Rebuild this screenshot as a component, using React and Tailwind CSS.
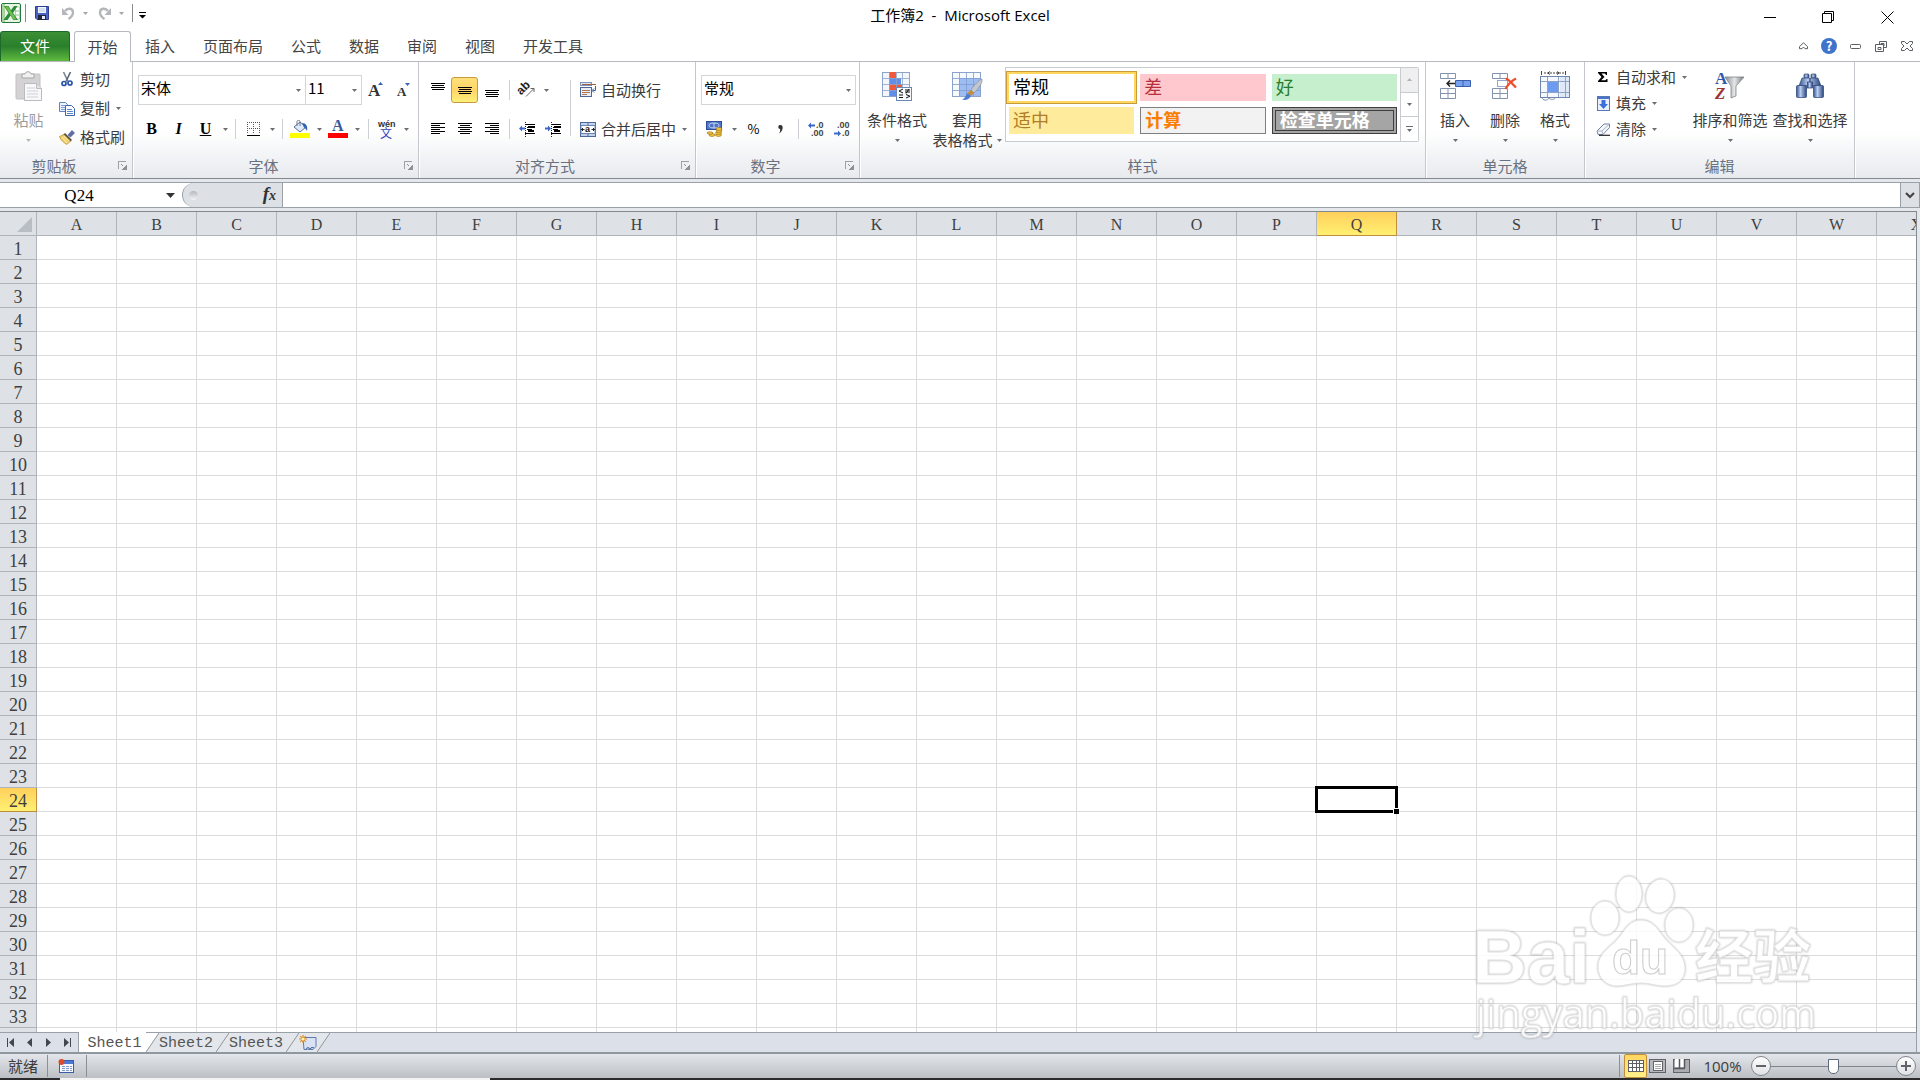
import { useState } from 'react';

const UI = "font-['Noto_Sans_CJK_SC',sans-serif]";
const COLUMNS = 'ABCDEFGHIJKLMNOPQRSTUVWX'.split('');
const ROWS = Array.from({ length: 34 }, (_, i) => i + 1);
const MENU_TABS = ['插入', '页面布局', '公式', '数据', '审阅', '视图', '开发工具'];

/* ---------- small shared parts ---------- */

function Arrow({ className = 'text-[#6b6f75]' }) {
  return (
    <svg width="5" height="3" viewBox="0 0 5 3" className={className} aria-hidden="true">
      <path d="M0 0h5L2.5 3z" fill="currentColor" />
    </svg>
  );
}

function DropArrow({ label }) {
  return (
    <button type="button" aria-label={label} className="flex h-6 w-3 items-center justify-center">
      <Arrow />
    </button>
  );
}

function Tool({ label, wide, active, children }) {
  return (
    <button
      type="button"
      aria-label={label}
      className={`flex h-[26px] items-center justify-center ${wide ? 'w-[27px]' : 'w-[26px]'} ${
        active ? 'rounded-[3px] border border-[#c69a3c] bg-linear-to-b from-[#ffe07a] via-[#ffd565] to-[#fff07c]' : ''
      }`}
    >
      {children}
    </button>
  );
}

function Sep({ tight }) {
  return <span className={`h-5 w-px bg-[#cdd1d6] ${tight ? 'mx-1' : 'mx-[5px]'}`} />;
}

function Launcher({ label }) {
  return (
    <button type="button" aria-label={label} className="absolute right-1 bottom-2">
      <svg width="10" height="9" viewBox="0 0 10 9" shapeRendering="crispEdges">
        <path d="M0 0h8v1H1v7H0z" fill="#9da1a6" />
        <path d="M9 4v5H4V8h1V7h1V6h1V5h1V4zM3 3h1v1h1v1H4V4H3z" fill="#8d9196" />
      </svg>
    </button>
  );
}

function Group({ title, width, launcher, children }) {
  return (
    <section
      aria-label={title}
      className={`relative flex shrink-0 flex-col border-r border-[#c3c7cc] shadow-[1px_0_0_#fff] ${width}`}
    >
      <div className="flex h-[92px]">{children}</div>
      <h2 className={`h-6 text-center text-[15px] leading-6 text-[#697180] ${launcher ? 'pr-6' : ''}`}>{title}</h2>
      {launcher && <Launcher label={`${title}设置`} />}
    </section>
  );
}

function BigButton({ label, second, width, muted, icon }) {
  return (
    <button
      type="button"
      className={`flex flex-col items-center pt-2 text-[15px] whitespace-nowrap ${width} ${muted ? 'text-[#9c9c9c]' : 'text-[#3b3b3b]'}`}
    >
      <span className="flex h-8 items-center">{icon}</span>
      <span className="mt-2 h-5 leading-5">{label}</span>
      <span className="flex h-5 items-center gap-1 leading-5">
        {second}
        <Arrow className={muted ? 'text-[#b8b8b8]' : 'text-[#6b6f75]'} />
      </span>
    </button>
  );
}

function SmallButton({ label, height, arrow, icon }) {
  return (
    <button type="button" className={`flex items-center text-[15px] whitespace-nowrap text-[#3b3b3b] ${height}`}>
      <span className="flex w-5 justify-center">{icon}</span>
      <span className="mr-[6px] ml-[3px]">{label}</span>
      {arrow && <Arrow />}
    </button>
  );
}

function Combo({ label, width, options }) {
  return (
    <span className={`relative flex h-[30px] items-center border border-[#d3d5d8] bg-white ${width}`}>
      <select
        aria-label={label}
        className="h-full w-full appearance-none bg-transparent pb-1 pl-[2px] text-[15px] text-black outline-none"
      >
        {options.map((o) => (
          <option key={o}>{o}</option>
        ))}
      </select>
      <span className="pointer-events-none absolute right-1">
        <Arrow />
      </span>
    </span>
  );
}

/* ---------- icons ---------- */

const ExcelLogo = () => (
  <svg width="20" height="20" viewBox="0 0 20 20">
    <rect x="0.5" y="0.5" width="19" height="19" rx="1.5" fill="#e8f3e3" stroke="#1f7a3c" />
    <path d="M1 1h3v18H1z" fill="#a8d59b" />
    <path d="M14.500 4h4v12h-4z" fill="#fff" stroke="#8cc084" strokeWidth="0.600" />
    <path d="M14 8h4M14 12h4" stroke="#8cc084" />
    <path d="M3 3h4.500l2.500 4.200L13 3h3.500L12 10l5 7h-4.700l-2.800-4.500L6.500 17H2.500L7.500 10z" fill="#2b8a3e" />
    <path d="M4 3.500h3l8.500 13h-3z" fill="#6fc04c" />
  </svg>
);

const SaveIcon = () => (
  <svg width="14" height="14" viewBox="0 0 14 14">
    <path d="M0.500 0.500h13v13H2L0.500 12z" fill="#4a62c4" stroke="#2e3d91" />
    <rect x="3" y="1" width="8" height="6" fill="#f1f5fc" />
    <path d="M4 3h6M4 5h6" stroke="#b7c7e8" />
    <rect x="3" y="9" width="8" height="5" fill="#20263d" />
    <rect x="7" y="10" width="3" height="3" fill="#e8ecf5" />
  </svg>
);

const UndoIcon = ({ flip }) => (
  <svg width="13" height="13" viewBox="0 0 13 13" className={flip ? '-scale-x-100' : ''}>
    <path d="M3 4C5.500 0.500 11 1 11 5.500c0 3-2 4.800-4.500 6.500" fill="none" stroke="#b4b6b9" strokeWidth="2.400" />
    <path d="M0 1v7h6.500z" fill="#b4b6b9" />
  </svg>
);

const PasteIcon = () => (
  <svg width="28" height="31" viewBox="0 0 28 31">
    <rect x="1" y="3" width="24" height="25" rx="1" fill="#d4d2d3" stroke="#c2c0c1" />
    <path d="M7 3h3c0-3 6-3 6 0h3v4H7z" fill="#f0f0f0" stroke="#a6a6a6" />
    <path d="M9.500 12.500h12l5 5v12h-17z" fill="#f8f8f9" stroke="#b9bbc0" />
    <path d="M21.500 12.500v5h5" fill="#e3e3e5" stroke="#b9bbc0" />
    <path d="M12 17h8M12 20h11M12 23h11M12 26h11" stroke="#cfd1d6" />
  </svg>
);

const CutIcon = () => (
  <svg width="12" height="15" viewBox="0 0 12 15" fill="none">
    <path d="M2.500 0L7 9.500" stroke="#7b8699" strokeWidth="1.600" />
    <path d="M9.500 0L5 9.500" stroke="#5b6680" strokeWidth="1.600" />
    <circle cx="3" cy="11.500" r="2" stroke="#2a55a8" strokeWidth="1.700" />
    <circle cx="9" cy="11" r="2" stroke="#2a55a8" strokeWidth="1.700" />
  </svg>
);

const CopyIcon = () => (
  <svg width="16" height="14" viewBox="0 0 16 14">
    <path d="M0.500 0.500h6l2 2v7h-8z" fill="#eef4fd" stroke="#5e83c2" />
    <path d="M2 3.500h4M2 5.500h4M2 7.500h4" stroke="#7d9fd9" />
    <path d="M6.500 3.500h6l3 3v7h-9z" fill="#fff" stroke="#3c64ad" />
    <path d="M8 7.500h5M8 9.500h6M8 11.500h6" stroke="#5e86cc" />
  </svg>
);

const BrushIcon = () => (
  <svg width="16" height="15" viewBox="0 0 16 15">
    <path d="M9 5l4-4.500 2.500 2.500L11.500 7z" fill="#5d6fa8" stroke="#404f82" strokeWidth="0.600" />
    <path d="M6 3l7 7-2 2-7-7z" fill="#4b4b4b" />
    <path d="M5 4.500l6.500 6.500L8 14.500C5 13 1.500 10 0.500 6.500z" fill="#f2cf68" stroke="#b58a2a" strokeWidth="0.700" />
    <path d="M3 7l5 6M5 6l5 5" stroke="#fbeeb9" />
  </svg>
);

const GrowIcon = ({ small }) => (
  <svg width="18" height="18" viewBox="0 0 18 18" className="overflow-visible">
    <text
      x={small ? 3 : 0}
      y="15"
      fill="#333"
      className={small ? "font-['Liberation_Serif',serif] text-[13px] font-bold" : "font-['Liberation_Serif',serif] text-[17px] font-bold"}
    >
      A
    </text>
    <path d={small ? 'M11 2h5l-2.500 3z' : 'M10 4h5l-2.500-3z'} fill="#3a62b0" />
  </svg>
);

const BorderIcon = () => (
  <svg width="13" height="14" viewBox="0 0 13 14" shapeRendering="crispEdges">
    <path d="M0 0.500h13M0 6.500h13M0.500 0v12M6.500 0v12M12.500 0v12" stroke="#555" strokeDasharray="1 1" />
    <path d="M0 13.500h13" stroke="#000" />
  </svg>
);

const FillIcon = () => (
  <svg width="20" height="18" viewBox="0 0 20 18">
    <path d="M4 7l6-5 6 5-6 5z" fill="#dfe9f8" stroke="#5a7099" />
    <path d="M7 6V1.500c0-1.500 3-1.500 3 0V6" fill="none" stroke="#6b7891" />
    <path d="M12 3c4 0 6 3 5 8-1-2-2-3-3-3.500z" fill="#2f62b5" />
    <rect y="13" width="20" height="5" fill="#ffff00" />
  </svg>
);

const FontColorIcon = () => (
  <svg width="20" height="18" viewBox="0 0 20 18" className="overflow-visible">
    <text x="4" y="11" fill="#3b5998" className="font-['Liberation_Serif',serif] text-[16px] font-bold">A</text>
    <rect y="13" width="20" height="5" fill="#ff0000" />
  </svg>
);

const PinyinIcon = () => (
  <svg width="18" height="18" viewBox="0 0 18 18" className="overflow-visible">
    <text x="0" y="7" fill="#333" className="font-['Liberation_Sans',sans-serif] text-[9px] font-bold">wén</text>
    <text x="2" y="18" fill="#3344c0" className="font-['Noto_Sans_CJK_SC',sans-serif] text-[12px]">文</text>
  </svg>
);

const Lines = ({ rows }) => (
  <svg width="14" height="14" viewBox="0 0 14 14" shapeRendering="crispEdges">
    {rows.map(([x, y, w]) => (
      <rect key={y} x={x} y={y} width={w} height="1" fill="#000" />
    ))}
  </svg>
);

const ALIGN = {
  top: [[0, 0, 14], [1, 2, 12], [0, 4, 14], [1, 6, 12]],
  middle: [[0, 4, 14], [1, 6, 12], [0, 8, 14], [1, 10, 12]],
  bottom: [[0, 7, 14], [1, 9, 12], [0, 11, 14], [1, 13, 12]],
  left: [[0, 1, 14], [0, 3, 9], [0, 5, 14], [0, 7, 9], [0, 9, 14], [0, 11, 9]],
  center: [[0, 1, 14], [2, 3, 10], [0, 5, 14], [2, 7, 10], [0, 9, 14], [2, 11, 10]],
  right: [[0, 1, 14], [5, 3, 9], [0, 5, 14], [5, 7, 9], [0, 9, 14], [5, 11, 9]],
};

const OrientIcon = () => (
  <svg width="16" height="16" viewBox="0 0 16 16" className="overflow-visible">
    <text x="1" y="13" transform="rotate(-45 2 12)" fill="#222" className="font-['Liberation_Sans',sans-serif] text-[12px] font-bold">ab</text>
    <path d="M7 14.500L15 6.500M15 6.500h-3.500M15 6.500V10" stroke="#666" fill="none" />
  </svg>
);

const IndentIcon = ({ increase }) => (
  <svg width="16" height="15" viewBox="0 0 16 15">
    <path d="M6 2.500h10M8 5h8M8 7.500h5M6 11h10" stroke="#000" shapeRendering="crispEdges" />
    <path d="M9 4.500h7M9 8.500h6" stroke="#000" strokeWidth="2" shapeRendering="crispEdges" />
    <path d="M6.500 0v15" stroke="#222" strokeDasharray="1 1" />
    <path d={increase ? 'M6 6.500L3 3.500v2H0v2h3v2z' : 'M0 6.500l3-3v2h3v2H3v2z'} fill="#3a68c8" />
  </svg>
);

const WrapIcon = () => (
  <svg width="17" height="16" viewBox="0 0 17 16">
    <rect x="0.500" y="0.500" width="11" height="3" fill="#dce6f5" stroke="#7d95bd" />
    <rect x="0.500" y="5.500" width="11" height="9" fill="#e9effa" stroke="#4d6896" />
    <path d="M2 2.500h14" stroke="#a0623a" />
    <path d="M2 8.500h8M2 10.500h8M2 12.500h5" stroke="#b07a54" />
    <path d="M15.500 4v4.500h-3M14 6.500l-2 2 2 2" fill="none" stroke="#3b5fa5" />
  </svg>
);

const MergeIcon = () => (
  <svg width="16" height="15" viewBox="0 0 16 15" className="overflow-visible">
    <rect x="0.500" y="0.500" width="15" height="14" fill="#c2d2ec" stroke="#4d6896" />
    <path d="M8 1v3M8 11v3" stroke="#4d6896" />
    <rect x="1" y="3.500" width="14" height="8" fill="#fff" stroke="#6a83ae" />
    <path d="M4.500 7.500H1M11.500 7.500H15M3 6L1.500 7.500 3 9M13 6l1.500 1.500L13 9" stroke="#222" fill="none" />
    <text x="5" y="10" fill="#111" className="font-['Liberation_Sans',sans-serif] text-[9px] font-bold">a</text>
  </svg>
);

const CurrencyIcon = () => (
  <svg width="17" height="16" viewBox="0 0 17 16">
    <rect x="0.500" y="0.500" width="15" height="8" fill="#4f74c8" stroke="#2d4c96" />
    <ellipse cx="8" cy="4.500" rx="5" ry="2.500" fill="none" stroke="#c8d7f4" />
    <path d="M8 2v5" stroke="#c8d7f4" />
    <g fill="#f5c944" stroke="#9d7316" strokeWidth="0.700">
      <ellipse cx="12.500" cy="14" rx="3" ry="1.400" />
      <ellipse cx="12.500" cy="12" rx="3" ry="1.400" />
      <ellipse cx="13" cy="10" rx="3" ry="1.400" />
      <ellipse cx="13" cy="8" rx="3" ry="1.400" />
      <ellipse cx="6" cy="14" rx="3" ry="1.400" />
      <ellipse cx="4" cy="12" rx="3" ry="1.200" />
    </g>
  </svg>
);

const DecimalIcon = ({ less }) => (
  <svg width="17" height="15" viewBox="0 0 17 15" className="overflow-visible font-['Liberation_Sans',sans-serif] text-[9px] font-bold">
    <text x={less ? 3 : 8} y="6" fill="#444">{less ? '.00' : '.0'}</text>
    <text x={less ? 8 : 3} y="14" fill="#444">{less ? '.0' : '.00'}</text>
    <path d={less ? 'M7 11.500l-3-3v2H0v2h4v2z' : 'M0 3.500l3-3v2h4v2H3v2z'} fill="#3a68c8" />
  </svg>
);

const ConditionalIcon = () => (
  <svg width="31" height="31" viewBox="0 0 31 31">
    <rect x="0.500" y="1.500" width="27" height="24" fill="#f3f7fd" stroke="#8da3c8" />
    <path d="M7 1h7v6H7zM7 13h13v6H7z" fill="#f0593d" />
    <path d="M7 7h12v6H7zM7 19h7v6H7z" fill="#5f8fea" />
    <path d="M7.500 1v25M14.500 1v25M20.500 1v25M0 7.500h28M0 13.500h28M0 19.500h28" stroke="#8da3c8" strokeWidth="0.800" />
    <rect x="14.500" y="16.500" width="15" height="13" fill="#f7f9fc" stroke="#6e86b3" />
    <path d="M21 18l-4 2 4 2M17 24h4M17 26.500h4M23 19h5M23 21h5M27 18l-3 4.500M24 23.500l4 1.700-4 1.800" stroke="#111" fill="none" />
  </svg>
);

const TableFormatIcon = () => (
  <svg width="31" height="31" viewBox="0 0 31 31">
    <rect x="0.500" y="1.500" width="28" height="24" fill="#f6f9fe" stroke="#8da3c8" />
    <path d="M7 7h21v18H7z" fill="#9dbdf2" />
    <path d="M7.500 1v25M14.500 1v25M21.500 1v25M0 7.500h29M0 13.500h29M0 19.500h29" stroke="#7f9ccf" strokeWidth="0.800" />
    <path d="M30 8c1 4-4 10-8 14l-3-3C22 14 27 9 30 8z" fill="#c3c7cf" stroke="#7c8390" strokeWidth="0.600" />
    <path d="M19 19l3 3-3 3-3.500-3z" fill="#c98a3a" />
    <path d="M15.500 22l3.500 3c-2 4-6 4.500-9 3.500 3-1 3.500-4 5.500-6.500z" fill="#4b7ed6" />
  </svg>
);

const InsertIcon = () => (
  <svg width="31" height="28" viewBox="0 0 31 28">
    <g fill="#fff" stroke="#8493ad">
      <path d="M0.500 1.500h15v5h-15zM8 1.500v5" />
      <path d="M0.500 16.500h15v10h-15zM8 16.500v10M0.500 21.500h15" />
    </g>
    <path d="M15.500 8.500h15v6h-15zM23 8.500v6" fill="#78a2f0" stroke="#3a5fae" />
    <path d="M7 11.500h8M10 8.500l-3 3 3 3" stroke="#222" strokeWidth="1.400" fill="none" />
  </svg>
);

const DeleteIcon = () => (
  <svg width="27" height="28" viewBox="0 0 27 28">
    <g fill="#fff" stroke="#8493ad">
      <path d="M0.500 1.500h15v5h-15zM8 1.500v5" />
      <path d="M0.500 16.500h15v10h-15zM8 16.500v10M0.500 21.500h15" />
    </g>
    <path d="M5.500 8.500h10v6h-10z" fill="none" stroke="#2a4f9e" strokeDasharray="1 1" />
    <path d="M14 6.500c4 2 7 6 10 9M24 6.500c-4 2-8 6-10.500 10.500" stroke="#ef4a2c" strokeWidth="2.200" fill="none" />
  </svg>
);

const FormatIcon = () => (
  <svg width="31" height="30" viewBox="0 0 31 30">
    <path d="M1.500 0v4M25.500 0v4" stroke="#444" />
    <path d="M4 2h20" stroke="#444" strokeDasharray="2 1" />
    <path d="M10 0.500L8 2l2 1.500M17 0.500L19 2l-2 1.500" stroke="#333" fill="none" />
    <path d="M2 26c0 4 6 4 7 1 1 2 6 2 7-1" fill="#fff" stroke="#7c8fae" />
    <rect x="0.500" y="5.500" width="29" height="21" fill="#f5f8fd" stroke="#6f86ae" />
    <path d="M20 6h9v20h-9z" fill="#dfe8f7" />
    <rect x="8" y="10" width="10" height="11" fill="#6d9bf0" />
    <path d="M7.500 6v20M18.500 6v20M25.500 6v20M1 10.500h28M1 21.500h28" stroke="#8ea3c7" />
  </svg>
);

const SumIcon = () => (
  <svg width="10" height="10" viewBox="0 0 10 10">
    <path d="M0 0h9v3H8L7 1.500H3.500L6.500 5l-3.300 3.300H7.500L8.500 7h1v3H0V9l3.500-4L0 1z" fill="#000" />
  </svg>
);

const FillDownIcon = () => (
  <svg width="13" height="15" viewBox="0 0 13 15">
    <rect x="0.500" y="0.500" width="12" height="14" fill="#eaf1fc" stroke="#5577b5" />
    <path d="M1 1h11v2H1z" fill="#4a74c9" />
    <path d="M4.500 4h4v4H11l-4.500 5L2 8h2.500z" fill="#3c6fd8" />
  </svg>
);

const EraserIcon = () => (
  <svg width="15" height="13" viewBox="0 0 15 13">
    <path d="M1 8l7-7h5.500v3.500L7 11.500H2z" fill="#f4f7fc" stroke="#76839c" />
    <path d="M1 8h5l7.500-7M6 8l1 3.500" fill="none" stroke="#a9b4c9" />
    <path d="M3 12.300h11" stroke="#222" strokeWidth="1.200" />
  </svg>
);

const SortIcon = () => (
  <svg width="30" height="30" viewBox="0 0 30 30" className="overflow-visible">
    <defs>
      <linearGradient id="funnel" x1="0" x2="1">
        <stop offset="0" stopColor="#8a8d92" />
        <stop offset="0.500" stopColor="#e4e5e7" />
        <stop offset="1" stopColor="#77797e" />
      </linearGradient>
    </defs>
    <path d="M10 6h19l-8 9v10l-5 2V15z" fill="url(#funnel)" stroke="#74777c" strokeWidth="0.700" />
    <text x="0" y="13" fill="#3558ab" className="font-['Liberation_Serif',serif] text-[17px] font-bold">A</text>
    <text x="0" y="28" fill="#9c3434" className="font-['Liberation_Serif',serif] text-[17px] font-bold italic">Z</text>
  </svg>
);

const FindIcon = () => (
  <svg width="28" height="26" viewBox="0 0 28 26">
    <defs>
      <linearGradient id="lens" x1="0" x2="1">
        <stop offset="0" stopColor="#33528f" />
        <stop offset="0.400" stopColor="#b9cdf0" />
        <stop offset="1" stopColor="#2b4680" />
      </linearGradient>
    </defs>
    <g fill="url(#lens)" stroke="#2a4274" strokeWidth="0.700">
      <rect x="8" y="1" width="5" height="4" rx="1" />
      <rect x="15" y="1" width="5" height="4" rx="1" />
      <path d="M6 5h7.500v8H3zM14.500 5H22l3 8H14.500z" />
      <rect x="11.500" y="9" width="5" height="6" />
      <rect x="0.500" y="12.500" width="10" height="12" rx="1" />
      <rect x="17.500" y="12.500" width="10" height="12" rx="1" />
    </g>
  </svg>
);

const MacroIcon = () => (
  <svg width="16" height="14" viewBox="0 0 16 14">
    <rect x="1.500" y="1.500" width="14" height="12" fill="#f5f8fe" stroke="#3a5daa" />
    <path d="M2 2h13v3H2z" fill="#4d79d6" />
    <path d="M4 7.500h3M8 7.500h3M12 7.500h2M4 9.500h3M8 9.500h3M12 9.500h2M4 11.500h3M8 11.500h3M12 11.500h2" stroke="#7d97c9" />
    <circle cx="3.500" cy="3" r="3" fill="#dc4a2c" />
  </svg>
);

const NewSheetIcon = () => (
  <svg width="18" height="16" viewBox="0 0 18 16">
    <path d="M4 2.500h13v9l-3 3H5z" fill="#d9e3f5" stroke="#5f79ab" />
    <path d="M7 15c0-3 3-3 4-1 1-2 3-2 4-1" fill="#9db4de" stroke="#4e689b" />
    <path d="M4 0v8M0 4h8M1.200 1.200l5.600 5.600M6.800 1.200L1.200 6.800" stroke="#e08c1c" strokeWidth="1.200" />
    <circle cx="4" cy="4" r="1.500" fill="#fff3c0" />
  </svg>
);

/* ---------- window ---------- */

function TitleBar() {
  return (
    <header className="grid h-[31px] shrink-0 grid-cols-[1fr_auto_1fr] bg-white">
      <div className="flex h-[26px] items-center pl-px">
        <ExcelLogo />
        <span className="mr-[9px] ml-1 h-[18px] w-px bg-[#8a8a8a]" />
        <button type="button" aria-label="保存"><SaveIcon /></button>
        <button type="button" aria-label="撤消" className="ml-[13px]"><UndoIcon /></button>
        <button type="button" aria-label="撤消列表" className="ml-2 flex h-4 items-center"><Arrow className="text-[#a4a6a9]" /></button>
        <button type="button" aria-label="恢复" className="ml-[10px]"><UndoIcon flip /></button>
        <button type="button" aria-label="恢复列表" className="ml-2 flex h-4 items-center"><Arrow className="text-[#a4a6a9]" /></button>
        <span className="mr-[6px] ml-2 h-[18px] w-px bg-[#8a8a8a]" />
        <button type="button" aria-label="自定义快速访问工具栏" className="mt-1">
          <svg width="7" height="7" viewBox="0 0 7 7">
            <path d="M0 0h7v1H0zM0 3h7L3.500 6.500z" fill="#000" />
          </svg>
        </button>
      </div>
      <h1 className="font-['Open_Sans','Noto_Sans_CJK_SC',sans-serif] text-[15px] leading-[30px] text-black">
        工作簿2&nbsp; -&nbsp; Microsoft Excel
      </h1>
      <div className="flex items-center justify-end gap-[46px] pt-1 pr-[26px]">
        <button type="button" aria-label="最小化">
          <svg width="12" height="12" viewBox="0 0 12 12"><path d="M0 5.500h12" stroke="#000" /></svg>
        </button>
        <button type="button" aria-label="还原">
          <svg width="13" height="13" viewBox="0 0 13 13" fill="none" stroke="#000">
            <path d="M0.500 2.500h9v9h-9zM2.500 2.500v-2h9v9h-2" />
          </svg>
        </button>
        <button type="button" aria-label="关闭">
          <svg width="13" height="13" viewBox="0 0 13 13"><path d="M0.500 0.500l12 12M12.500 0.500l-12 12" stroke="#000" /></svg>
        </button>
      </div>
    </header>
  );
}

function MenuTabs() {
  return (
    <nav className="flex h-[31px] shrink-0 items-end border-b border-[#b6babf] bg-white text-[15px] text-[#444]">
      <button
        type="button"
        className="h-[30px] w-[70px] rounded-t-[3px] border border-b-0 border-[#1d6a2b] bg-linear-to-b from-[#3b8f35] via-[#2a7f2c] to-[#5fbb3f] text-white"
      >
        文件
      </button>
      <button type="button" className="-mb-px ml-1 h-[31px] w-[57px] rounded-t-[3px] border border-b-0 border-[#b6babf] bg-white">
        开始
      </button>
      <div className="flex h-[30px] items-center">
        {MENU_TABS.map((t) => (
          <button key={t} type="button" className="px-[14px]">{t}</button>
        ))}
      </div>
      <div className="ml-auto flex h-[30px] items-center gap-[13px] pr-[7px]">
        <button type="button" aria-label="功能区最小化">
          <svg width="9" height="8" viewBox="0 0 9 8" fill="none" stroke="#5a5f66">
            <path d="M4.500 0.700l4 4v2H6L4.500 5 3 6.700H0.500v-2z" />
          </svg>
        </button>
        <button type="button" aria-label="帮助" className="flex size-4 items-center justify-center rounded-full bg-[#3f74cc] text-[13px] leading-4 font-bold text-white">
          ?
        </button>
        <button type="button" aria-label="最小化窗口">
          <svg width="12" height="5" viewBox="0 0 12 5"><rect x="0.500" y="0.500" width="10" height="4" rx="1" fill="none" stroke="#5a5f66" /></svg>
        </button>
        <button type="button" aria-label="还原窗口">
          <svg width="13" height="11" viewBox="0 0 13 11" fill="none" stroke="#5a5f66">
            <path d="M4.500 3.500v-3h7v6h-3" />
            <path d="M0.500 3.500h8v7h-8zM3 6.500h3v2H3zM6 3V2.500h3V5" />
          </svg>
        </button>
        <button type="button" aria-label="关闭窗口">
          <svg width="12" height="10" viewBox="0 0 12 10" fill="none" stroke="#5a5f66">
            <path d="M0.500 0.500h3L6 3l2.500-2.500h3v2L9 5l2.500 2.500v2h-3L6 7 3.500 9.500h-3v-2L3 5 0.500 2.500z" />
          </svg>
        </button>
      </div>
    </nav>
  );
}

const STYLE_CELLS = [
  { name: '常规', cls: 'bg-white text-black ring-2 ring-[#ffd75e] outline outline-1 outline-offset-2 outline-[#c79a3a]' },
  { name: '差', cls: 'bg-[#ffc7ce] text-[#b5303a]' },
  { name: '好', cls: 'bg-[#c6efce] text-[#2a7d2a]' },
  { name: '适中', cls: 'bg-[#ffeb9c] text-[#b07d25]' },
  { name: '计算', cls: 'border border-[#7f7f7f] bg-[#f2f2f2] font-bold text-[#fa7d00]' },
  { name: '检查单元格', cls: 'border-4 border-double border-[#3f3f3f] bg-[#a5a5a5] font-bold text-white' },
];

function Ribbon() {
  return (
    <div className="flex h-[117px] shrink-0 overflow-hidden border-b border-[#84898f] bg-linear-to-b from-white from-60% to-[#e8eaee]">
      <Group title="剪贴板" width="w-[133px]" launcher>
        <BigButton label="粘贴" width="w-[57px]" muted icon={<PasteIcon />} />
        <div className="flex flex-col pt-[3px]">
          <SmallButton label="剪切" height="h-[29px]" icon={<CutIcon />} />
          <SmallButton label="复制" height="h-[29px]" arrow icon={<CopyIcon />} />
          <SmallButton label="格式刷" height="h-[29px]" icon={<BrushIcon />} />
        </div>
      </Group>

      <Group title="字体" width="w-[286px]" launcher>
        <div className="flex flex-col gap-[11px] pt-[13px] pl-[5px]">
          <div className="flex h-[30px] items-center">
            <Combo label="字体" width="w-[168px]" options={['宋体', '黑体', '楷体']} />
            <Combo label="字号" width="-ml-px w-[57px]" options={['11', '12', '14']} />
            <span className="w-[2px]" />
            <Tool label="增大字号"><GrowIcon /></Tool>
            <Tool label="减小字号"><GrowIcon small /></Tool>
          </div>
          <div className="flex items-center">
            <Tool label="加粗" wide><b className="font-['Liberation_Serif',serif] text-[16px]">B</b></Tool>
            <Tool label="倾斜" wide><i className="font-['Liberation_Serif',serif] text-[16px] font-bold">I</i></Tool>
            <Tool label="下划线" wide><u className="font-['Liberation_Serif',serif] text-[16px] font-bold">U</u></Tool>
            <DropArrow label="下划线选项" />
            <Sep tight />
            <Tool label="边框"><BorderIcon /></Tool>
            <DropArrow label="边框选项" />
            <Sep tight />
            <Tool label="填充颜色"><FillIcon /></Tool>
            <DropArrow label="填充颜色选项" />
            <Tool label="字体颜色"><FontColorIcon /></Tool>
            <DropArrow label="字体颜色选项" />
            <Sep />
            <Tool label="拼音"><PinyinIcon /></Tool>
            <DropArrow label="拼音选项" />
          </div>
        </div>
      </Group>

      <Group title="对齐方式" width="w-[277px]" launcher>
        <div className="flex flex-col gap-[11px] pt-[13px] pl-[5px]">
          <div className="flex h-[30px] items-center">
            <Tool label="顶端对齐" wide><Lines rows={ALIGN.top} /></Tool>
            <Tool label="垂直居中" wide active><Lines rows={ALIGN.middle} /></Tool>
            <Tool label="底端对齐" wide><Lines rows={ALIGN.bottom} /></Tool>
            <Sep tight />
            <Tool label="方向"><OrientIcon /></Tool>
            <DropArrow label="方向选项" />
          </div>
          <div className="flex items-center">
            <Tool label="左对齐" wide><Lines rows={ALIGN.left} /></Tool>
            <Tool label="居中" wide><Lines rows={ALIGN.center} /></Tool>
            <Tool label="右对齐" wide><Lines rows={ALIGN.right} /></Tool>
            <Sep tight />
            <Tool label="减少缩进量"><IndentIcon /></Tool>
            <Tool label="增加缩进量"><IndentIcon increase /></Tool>
          </div>
        </div>
        <span className="mt-[18px] mr-[7px] ml-1 h-14 w-px bg-[#cdd1d6]" />
        <div className="flex flex-col gap-[11px] pt-[13px]">
          <SmallButton label="自动换行" height="h-[30px]" icon={<WrapIcon />} />
          <SmallButton label="合并后居中" height="h-[26px]" arrow icon={<MergeIcon />} />
        </div>
      </Group>

      <Group title="数字" width="w-[164px]" launcher>
        <div className="flex flex-col gap-[11px] pt-[13px] pl-[5px]">
          <Combo label="数字格式" width="w-[155px]" options={['常规', '数值', '货币']} />
          <div className="flex items-center">
            <Tool label="会计数字格式" wide><CurrencyIcon /></Tool>
            <DropArrow label="会计数字格式选项" />
            <Tool label="百分比样式" wide><span className="text-[13px]">%</span></Tool>
            <Tool label="千位分隔样式" wide>
              <svg width="5" height="9" viewBox="0 0 5 9"><path d="M2.500 0a2 2 0 00-.4 4C2.500 5.500 2 7 1 8.500 4 7 4.800 4.500 4.600 2.200A2.100 2.100 0 002.500 0z" fill="#333" /></svg>
            </Tool>
            <Sep tight />
            <Tool label="增加小数位数"><DecimalIcon /></Tool>
            <Tool label="减少小数位数"><DecimalIcon less /></Tool>
          </div>
        </div>
      </Group>

      <Group title="样式" width="w-[566px]">
        <div className="flex w-full pl-[5px]">
          <BigButton label="条件格式" width="w-[64px]" icon={<ConditionalIcon />} />
          <BigButton label="套用" second="表格格式" width="w-[76px]" icon={<TableFormatIcon />} />
          <div className="mt-[5px] mr-[6px] flex h-[75px] flex-1">
            <div className="grid flex-1 auto-rows-[27px] grid-cols-3 gap-[6px] border border-[#c8cbcf] bg-white px-[3px] pt-[6px]">
              {STYLE_CELLS.map((s) => (
                <button key={s.name} type="button" className={`flex items-center pb-1 pl-1 text-[18px] leading-5 whitespace-nowrap ${s.cls}`}>
                  {s.name}
                </button>
              ))}
            </div>
            <div className="flex w-[18px] flex-col divide-y divide-[#c8cbcf] rounded-r-[2px] border border-l-0 border-[#c8cbcf] bg-white">
              <button type="button" aria-label="上一行" className="flex flex-1 items-center justify-center bg-[#efefef]">
                <span className="rotate-180"><Arrow className="block text-[#b0b2b5]" /></span>
              </button>
              <button type="button" aria-label="下一行" className="flex flex-1 items-center justify-center"><Arrow /></button>
              <button type="button" aria-label="其他样式" className="flex flex-1 flex-col items-center justify-center gap-[2px]">
                <span className="h-px w-[7px] bg-[#6b6f75]" />
                <Arrow />
              </button>
            </div>
          </div>
        </div>
      </Group>

      <Group title="单元格" width="w-[159px]">
        <div className="flex pl-1">
          <BigButton label="插入" width="w-[50px]" icon={<InsertIcon />} />
          <BigButton label="删除" width="w-[50px]" icon={<DeleteIcon />} />
          <BigButton label="格式" width="w-[50px]" icon={<FormatIcon />} />
        </div>
      </Group>

      <Group title="编辑" width="w-[270px]">
        <div className="flex w-[105px] flex-col pt-[2px] pl-2">
          <SmallButton label="自动求和" height="h-[26px]" arrow icon={<SumIcon />} />
          <SmallButton label="填充" height="h-[26px]" arrow icon={<FillDownIcon />} />
          <SmallButton label="清除" height="h-[26px]" arrow icon={<EraserIcon />} />
        </div>
        <BigButton label="排序和筛选" width="w-[80px]" icon={<SortIcon />} />
        <BigButton label="查找和选择" width="w-[80px]" icon={<FindIcon />} />
      </Group>
    </div>
  );
}

function FormulaBar({ cell }) {
  return (
    <div className="my-[3px] flex h-[26px] shrink-0 border-y border-[#9aa0a7] bg-white">
      <div className="flex w-[182px] items-center">
        <input
          aria-label="名称框"
          defaultValue={cell}
          className="w-[158px] bg-transparent pt-[2px] text-center font-['Liberation_Serif',serif] text-[17px] text-black outline-none"
        />
        <button type="button" aria-label="名称列表" className="ml-2">
          <svg width="9" height="5" viewBox="0 0 9 5"><path d="M0 0h9L4.500 5z" fill="#333" /></svg>
        </button>
      </div>
      <div className="flex w-[101px] items-center justify-between rounded-l-full border-r border-l border-[#9aa0a7] bg-[#dde1e6] pr-[6px] pl-[6px]">
        <span className="size-[9px] rounded-full bg-linear-to-b from-[#b4b8bd] to-[#f4f5f7]" />
        <button type="button" aria-label="插入函数" className="font-['Liberation_Serif',serif] text-[19px] leading-5 font-bold text-[#333] italic">
          f<span className="text-[14px]">x</span>
        </button>
      </div>
      <input aria-label="编辑栏" className="min-w-0 flex-1 px-1 outline-none" />
      <button type="button" aria-label="展开编辑栏" className="flex w-5 items-center justify-center border-x border-[#9aa0a7] bg-[#dde1e6]">
        <svg width="10" height="7" viewBox="0 0 10 7"><path d="M1 1l4 4 4-4" fill="none" stroke="#444" strokeWidth="2.200" /></svg>
      </button>
    </div>
  );
}

const HEAD = 'border-r border-b text-center font-normal text-[#3f3f3f]';
const HEAD_ON = 'border-[#c08f3c] bg-linear-to-b from-[#ffd05b] to-[#fff072]';
const HEAD_OFF = 'border-[#b0b5bb] bg-[#dee2e7]';

function Sheet({ active, onSelect }) {
  return (
    <main className="mr-[3px] min-h-0 flex-1 overflow-hidden border-t border-r border-[#84898f] bg-white">
      <table className="w-[1957px] table-fixed border-separate border-spacing-0 font-['Liberation_Serif',serif]">
        <colgroup>
          <col className="w-[37px]" />
          {COLUMNS.map((c) => <col key={c} className="w-[80px]" />)}
        </colgroup>
        <thead>
          <tr className="h-6">
            <th className={`${HEAD} ${HEAD_OFF} p-0`}>
              <svg width="15" height="15" viewBox="0 0 15 15" className="mt-px mr-1 ml-auto block" role="img" aria-label="全选">
                <path d="M15 0v15H0z" fill="#b9bec4" />
              </svg>
            </th>
            {COLUMNS.map((c) => (
              <th key={c} scope="col" className={`${HEAD} px-0 pt-[2px] pb-0 text-[16px] leading-5 ${c === active.col ? HEAD_ON : HEAD_OFF}`}>
                {c}
              </th>
            ))}
          </tr>
        </thead>
        <tbody>
          {ROWS.map((r) => (
            <tr key={r} className="h-6">
              <th scope="row" className={`${HEAD} px-0 pt-[2px] pb-0 text-[18px] leading-5 ${r === active.row ? HEAD_ON : HEAD_OFF}`}>
                {r}
              </th>
              {COLUMNS.map((c) => (
                <td
                  key={c}
                  onClick={() => onSelect({ col: c, row: r })}
                  className="relative border-r border-b border-[#dadcdd] p-0"
                >
                  {c === active.col && r === active.row && (
                    <span className="absolute -inset-[2px] z-10 border-[3px] border-black">
                      <span className="absolute -right-1 -bottom-1 size-[6px] border-t border-l border-white bg-black" />
                    </span>
                  )}
                </td>
              ))}
            </tr>
          ))}
        </tbody>
      </table>
    </main>
  );
}

function Slant({ left, right }) {
  return (
    <svg width="13" height="19" viewBox="0 0 13 19" className="shrink-0" aria-hidden="true">
      <path d="M0 0h13L0 19z" fill={left} />
      <path d="M13 0v19H0z" fill={right} />
      <path d="M0 19L13 0" stroke="#8f959c" />
    </svg>
  );
}

function SheetTabs() {
  const nav = [
    ['第一张', 'M0 0h1v9H0zM7 0v9L2 4.500z'],
    ['上一张', 'M6 0v9L1 4.500z'],
    ['下一张', 'M1 0v9l5-4.500z'],
    ['最后一张', 'M0 0v9l5-4.500zM6 0h1v9H6z'],
  ];
  return (
    <div className="mr-[3px] flex h-5 shrink-0 border-t border-r border-[#9aa0a7] bg-[#dce0e8] font-['Liberation_Mono',monospace] text-[15px] text-[#555]">
      <div className="flex w-[79px] items-center justify-between border-r border-[#9aa0a7] px-[7px]">
        {nav.map(([label, d]) => (
          <button key={label} type="button" aria-label={label}>
            <svg width="7" height="9" viewBox="0 0 7 9"><path d={d} fill="#42474e" /></svg>
          </button>
        ))}
      </div>
      <button type="button" className="-mt-px w-[67px] bg-white pt-[2px] pl-1 leading-5">Sheet1</button>
      <Slant left="#fff" right="#e3e6ea" />
      <button type="button" className="w-[57px] bg-[#e3e6ea] pt-px text-left leading-5">Sheet2</button>
      <Slant left="#e3e6ea" right="#e3e6ea" />
      <button type="button" className="w-[57px] bg-[#e3e6ea] pt-px text-left leading-5">Sheet3</button>
      <Slant left="#e3e6ea" right="#e3e6ea" />
      <button type="button" aria-label="插入工作表" className="flex w-[18px] items-center bg-[#e3e6ea]"><NewSheetIcon /></button>
      <Slant left="#e3e6ea" right="#dce0e8" />
    </div>
  );
}

const ZOOM_BTN = 'flex size-5 items-center justify-center rounded-full border border-[#7f858c] bg-linear-to-b from-white to-[#dfe1e4]';

function StatusBar() {
  const [zoom, setZoom] = useState(50);
  return (
    <footer className="flex h-[26px] shrink-0 items-center border-t-2 border-[#8f979f] bg-linear-to-b from-[#e3e6ea] to-[#bcc0c5] text-[15px] text-[#3b3b3b]">
      <span className="pl-2">就绪</span>
      <span className="mr-[10px] ml-[9px] h-[22px] w-px bg-[#8b9096]" />
      <button type="button" aria-label="录制宏"><MacroIcon /></button>
      <span className="ml-[12px] h-[22px] w-px bg-[#8b9096]" />
      <div className="ml-auto flex items-center pr-1">
        <span className="mr-1 h-[22px] w-px bg-[#8b9096]" />
        <button type="button" aria-label="普通" className="flex h-[24px] w-[23px] items-center justify-center rounded-[2px] border border-[#c08f3c] bg-linear-to-b from-[#ffd65f] to-[#fff08a]">
          <svg width="16" height="12" viewBox="0 0 16 12" shapeRendering="crispEdges">
            <rect width="16" height="12" fill="#5e6064" />
            <path d="M1 1h3v2H1zM5 1h3v2H5zM9 1h2v2H9zM12 1h3v2h-3zM1 4h3v3H1zM5 4h3v3H5zM9 4h2v3H9zM12 4h3v3h-3zM1 8h3v3H1zM5 8h3v3H5zM9 8h2v3H9zM12 8h3v3h-3z" fill="#fff" />
          </svg>
        </button>
        <button type="button" aria-label="页面布局" className="ml-[2px]">
          <svg width="17" height="14" viewBox="0 0 17 14">
            <rect x="0.500" y="0.500" width="16" height="13" fill="#b5b8bc" stroke="#606368" />
            <rect x="4.500" y="2.500" width="9" height="9" fill="#fff" stroke="#606368" />
            <path d="M6 5.500h6M6 7.500h6M6 9.500h6" stroke="#aaa" />
          </svg>
        </button>
        <button type="button" aria-label="分页预览" className="ml-[7px]">
          <svg width="17" height="14" viewBox="0 0 17 14">
            <rect x="0.500" y="0.500" width="16" height="13" fill="#a9acb1" stroke="#606368" />
            <path d="M2 0h4v8H2zM7 0h4v8H7z" fill="#fff" />
            <path d="M6.500 0v9M11.500 0v9M1 9.500h11" stroke="#55585d" strokeWidth="1.500" />
          </svg>
        </button>
        <span className="w-[61px] pl-1 text-center font-['Open_Sans',sans-serif]">100%</span>
        <button type="button" aria-label="缩小" className={ZOOM_BTN}><span className="h-[2px] w-[10px] bg-[#5f646a]" /></button>
        <input
          type="range"
          aria-label="显示比例"
          value={zoom}
          onChange={(e) => setZoom(Number(e.target.value))}
          className="h-5 w-[125px] appearance-none bg-[linear-gradient(#7f858c,#7f858c)] bg-[length:100%_1px] bg-center bg-no-repeat [&::-webkit-slider-thumb]:h-[15px] [&::-webkit-slider-thumb]:w-[11px] [&::-webkit-slider-thumb]:appearance-none [&::-webkit-slider-thumb]:rounded-b-[5px] [&::-webkit-slider-thumb]:border [&::-webkit-slider-thumb]:border-[#5f6b7a] [&::-webkit-slider-thumb]:bg-white"
        />
        <button type="button" aria-label="放大" className={ZOOM_BTN}>
          <svg width="10" height="10" viewBox="0 0 10 10"><path d="M5 0v10M0 5h10" stroke="#5f646a" strokeWidth="2" /></svg>
        </button>
      </div>
    </footer>
  );
}

function Watermark() {
  return (
    <svg
      width="360"
      height="180"
      viewBox="0 0 360 180"
      className="pointer-events-none absolute right-[95px] bottom-[30px] z-20 overflow-visible opacity-85 drop-shadow-[0_0_1px_rgba(0,0,0,0.3)]"
      fill="#fff"
      stroke="#dcdcdc"
      strokeWidth="1"
    >
      <ellipse cx="140" cy="48" rx="14" ry="17" />
      <ellipse cx="164" cy="24" rx="13" ry="18" />
      <ellipse cx="195" cy="26" rx="14" ry="17" transform="rotate(12 195 26)" />
      <ellipse cx="214" cy="55" rx="14" ry="17" />
      <path d="M176 50c11 0 16 8 22 16 8 11 22 17 22 32 0 14-10 18-21 18-8 0-14-3-23-3s-16 3-24 3c-10 0-19-7-19-19 0-15 14-20 22-31 6-8 10-16 21-16z" />
      <text x="7" y="113" className="font-['Liberation_Sans',sans-serif] text-[76px] font-bold">Bai</text>
      <text x="147" y="104" stroke="#c4c4c4" className="font-['Liberation_Sans',sans-serif] text-[46px] font-bold">du</text>
      <text x="230" y="108" className="font-['Noto_Sans_CJK_SC',sans-serif] text-[58px] font-bold">经验</text>
      <text x="11" y="158" className="font-['Open_Sans',sans-serif] text-[40px]">jingyan.baidu.com</text>
    </svg>
  );
}

export default function App() {
  const [active, setActive] = useState({ col: 'Q', row: 24 });

  return (
    <div className={`relative flex h-screen flex-col overflow-hidden bg-[#e4e7ec] ${UI}`}>
      <TitleBar />
      <MenuTabs />
      <Ribbon />
      <FormulaBar key={`${active.col}${active.row}`} cell={`${active.col}${active.row}`} />
      <Sheet active={active} onSelect={setActive} />
      <SheetTabs />
      <StatusBar />
      <div className="flex h-[2px] shrink-0 bg-[#2b2b2d]">
        <span className="ml-[60px] w-[430px] bg-[#f3f3f3]" />
      </div>
      <Watermark />
    </div>
  );
}
